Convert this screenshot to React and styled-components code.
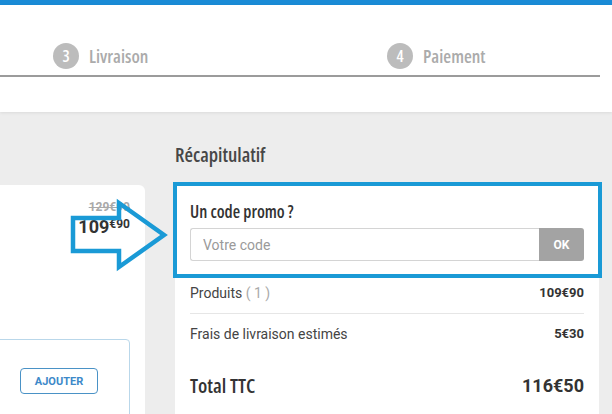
import React from "react";
import styled, { createGlobalStyle } from "styled-components";

const CONDENSED = `"Open Sans", "DejaVu Sans Condensed", sans-serif`;

const Global = createGlobalStyle`
  html, body { margin: 0; padding: 0; }
  body {
    background: #ededed;
    font-family: Roboto, "Liberation Sans", Arial, sans-serif;
    width: 612px;
    height: 414px;
    overflow: hidden;
  }
  * { box-sizing: border-box; }
`;

const Page = styled.div`
  position: relative;
  width: 612px;
  height: 414px;
  overflow: hidden;
`;

const TopBar = styled.div`
  height: 5px;
  background: #1a8bd6;
`;

const Header = styled.header`
  height: 107px;
  background: #fff;
  box-shadow: 0 1px 3px rgba(0, 0, 0, 0.08);
  position: relative;
  z-index: 1;
`;

const Stepper = styled.div`
  display: flex;
  width: 600px;
  padding: 38px 0 6px 53px;
  border-bottom: 2px solid #9b9b9b;
`;

const Step = styled.div`
  display: flex;
  align-items: center;
  gap: 10px;
  width: ${(p) => p.$w || "auto"};
  font-family: ${CONDENSED};
  font-stretch: 75%;
  font-weight: 600;
  font-size: 18px;
  color: #ababab;
`;

const StepNum = styled.span`
  width: 26px;
  height: 26px;
  border-radius: 50%;
  background: #bcbcbc;
  color: #fff;
  display: flex;
  align-items: center;
  justify-content: center;
  font-size: 16px;
  font-weight: 600;
`;

const Main = styled.main`
  display: flex;
  align-items: flex-start;
  gap: 30px;
`;

const LeftCol = styled.div`
  width: 145px;
  margin-top: 73px;
`;

const ProductCard = styled.div`
  background: #fff;
  border-radius: 0 6px 0 0;
  height: 240px;
  padding: 15px 15px 0 0;
  display: flex;
  flex-direction: column;
`;

const PriceBlock = styled.div`
  display: flex;
  flex-direction: column;
  align-items: flex-end;
`;

const OldPrice = styled.div`
  font-size: 12px;
  line-height: 14px;
  font-weight: bold;
  color: #a9a9a9;
  text-decoration: line-through;
`;

const NewPrice = styled.div`
  font-size: 18px;
  line-height: 22px;
  font-weight: bold;
  color: #333;
  margin-top: 2px;
  sup {
    font-size: 12px;
    vertical-align: 5px;
    line-height: 0;
  }
`;

const OptionBox = styled.div`
  margin: 101px 0 0 -20px;
  border: 1px solid #b9d7ea;
  border-radius: 4px;
  height: 120px;
  padding: 28px 0 0 39px;
`;

const AddButton = styled.button`
  width: 78px;
  height: 26px;
  border: 1px solid #4a92c6;
  border-radius: 4px;
  background: #fff;
  color: #3d89c9;
  font-family: Roboto, "Liberation Sans", sans-serif;
  font-size: 11px;
  font-weight: bold;
  padding: 0;
`;

const RightCol = styled.div`
  width: 424px;
  padding-top: 30px;
`;

const Title = styled.h2`
  margin: 0 0 14px;
  font-family: ${CONDENSED};
  font-stretch: 75%;
  font-size: 19.5px;
  line-height: 26px;
  font-weight: 600;
  color: #474747;
`;

const Panel = styled.div`
  background: #fff;
  height: 240px;
`;

const PromoBox = styled.div`
  margin: 0 -3px 0 -2px;
  border: 4px solid #1a9ad6;
  padding: 15px 14px 13px 13px;
  background: #fff;
`;

const PromoTitle = styled.div`
  font-family: ${CONDENSED};
  font-stretch: 75%;
  font-weight: 600;
  font-size: 17px;
  line-height: 22px;
  color: #333;
  margin-bottom: 5px;
`;

const PromoForm = styled.div`
  display: flex;
  height: 33px;
`;

const PromoInput = styled.input`
  flex: 1;
  border: 1px solid #d4d4d4;
  border-right: none;
  border-radius: 3px 0 0 3px;
  padding: 0 12px;
  font-family: Roboto, "Liberation Sans", sans-serif;
  font-size: 14px;
  color: #333;
  outline: none;
  &::placeholder { color: #9a9a9a; }
`;

const OkButton = styled.button`
  width: 45px;
  border: none;
  border-radius: 0 3px 3px 0;
  background: #a3a3a3;
  color: #fff;
  font-family: Roboto, "Liberation Sans", sans-serif;
  font-weight: bold;
  font-size: 12px;
  padding: 0;
`;

const Rows = styled.div`
  padding: 0 15px;
`;

const Row = styled.div`
  display: flex;
  justify-content: space-between;
  align-items: center;
  padding: ${(p) => p.$pad};
  border-bottom: ${(p) => (p.$divider ? "1px solid #e6e6e6" : "none")};
  font-size: 14px;
  line-height: 20px;
  color: #444;
`;

const Muted = styled.span`
  color: #aaa;
`;

const Amount = styled.span`
  font-weight: bold;
  font-size: 13px;
  color: #333;
`;

const TotalRow = styled.div`
  display: flex;
  justify-content: space-between;
  align-items: center;
  margin-top: 28px;
  line-height: 28px;
`;

const TotalLabel = styled.span`
  font-family: ${CONDENSED};
  font-stretch: 75%;
  font-weight: 600;
  font-size: 20px;
  color: #333;
`;

const TotalAmount = styled.span`
  font-weight: bold;
  font-size: 18px;
  color: #333;
`;

const Arrow = styled.svg`
  position: absolute;
  left: 0;
  top: 0;
  pointer-events: none;
`;

export default function App() {
  return (
    <Page>
      <Global />
      <TopBar />
      <Header>
        <Stepper>
          <Step $w="334px">
            <StepNum>3</StepNum>
            Livraison
          </Step>
          <Step>
            <StepNum>4</StepNum>
            Paiement
          </Step>
        </Stepper>
      </Header>
      <Main>
        <LeftCol>
          <ProductCard>
            <PriceBlock>
              <OldPrice>129€90</OldPrice>
              <NewPrice>
                109<sup>€90</sup>
              </NewPrice>
            </PriceBlock>
            <OptionBox>
              <AddButton>AJOUTER</AddButton>
            </OptionBox>
          </ProductCard>
        </LeftCol>
        <RightCol>
          <Title>Récapitulatif</Title>
          <Panel>
            <PromoBox>
              <PromoTitle>Un code promo ?</PromoTitle>
              <PromoForm>
                <PromoInput placeholder="Votre code" />
                <OkButton>OK</OkButton>
              </PromoForm>
            </PromoBox>
            <Rows>
              <Row $pad="5px 0 10px" $divider>
                <span>
                  Produits <Muted>( 1 )</Muted>
                </span>
                <Amount>109€90</Amount>
              </Row>
              <Row $pad="10px 0 0">
                <span>Frais de livraison estimés</span>
                <Amount>5€30</Amount>
              </Row>
              <TotalRow>
                <TotalLabel>Total TTC</TotalLabel>
                <TotalAmount>116€50</TotalAmount>
              </TotalRow>
            </Rows>
          </Panel>
        </RightCol>
      </Main>
      <Arrow width="612" height="414" viewBox="0 0 612 414">
        <polygon
          points="73,218 119,218 119,203 164,235 119,267 119,251 73,251"
          fill="none"
          stroke="#1a9ad6"
          strokeWidth="4.5"
          strokeLinejoin="miter"
        />
      </Arrow>
    </Page>
  );
}
